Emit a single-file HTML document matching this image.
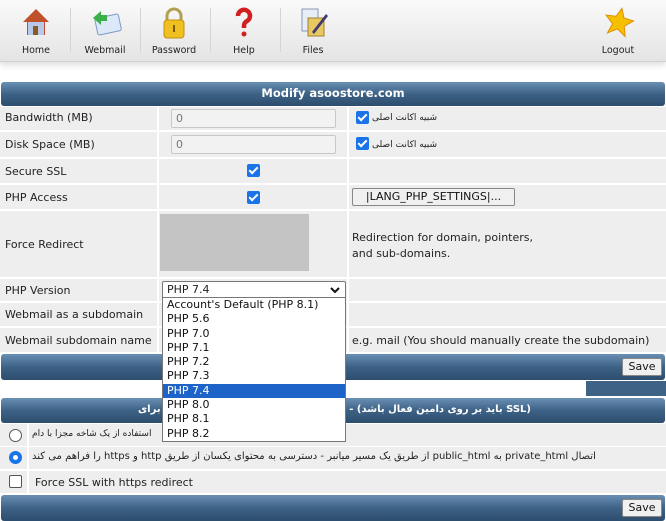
<!DOCTYPE html>
<html><head><meta charset="utf-8"><style>
*{box-sizing:border-box;margin:0;padding:0}
body{width:666px;height:519px;overflow:hidden;background:#fff;font-family:"DejaVu Sans","Liberation Sans","Noto Sans CJK SC",sans-serif;font-size:11px;color:#222;position:relative}
.tb{position:absolute;left:0;top:0;width:666px;height:62px;background:linear-gradient(#fafafa,#e4e4e4);border-bottom:1px solid #d0d0d0;box-shadow:0 3px 6px #ddd}
.ti{position:absolute;top:0;width:70px;height:60px;text-align:center;font-size:9.5px;color:#222}
.ti span{position:absolute;left:0;right:0;top:45px}
.ti svg{position:absolute;left:20px;top:6px}
.dv{position:absolute;top:8px;width:1px;height:44px;background:#d4d4d4}
.bar{position:absolute;left:1px;width:664px;background:linear-gradient(#6a8fb4,#3d6286 50%,#2d4d6d);border-radius:3px;color:#fff;font-weight:bold;text-align:center}
.row{position:absolute;left:0;width:666px;background:#eeeeee}
.c{position:absolute;top:0;bottom:0;background:#eeeeee}
.l{position:absolute;left:5px}
.inp{position:absolute;left:171px;width:165px;height:19px;border:1px solid #c8c8c8;border-radius:2px;background:#f2f2f2;color:#777;padding-left:4px;line-height:17px}
.cb{position:absolute;width:13px;height:13px;background:#1a73e8;border-radius:2px}
.cb:after{content:"";position:absolute;left:4px;top:1px;width:3px;height:7px;border:solid #fff;border-width:0 2px 2px 0;transform:rotate(45deg)}
.fa{font-size:9px}
.btn{position:absolute;border:1px solid #888;border-radius:2px;background:#f0f0f0;color:#111;text-align:center}
.dd{position:absolute;left:162px;top:297px;width:184px;height:145px;background:#fff;border:1px solid #777}
.dd div{height:14.3px;line-height:14px;padding-left:4px;font-size:11px;color:#111}
.dd .s{background:#1e64c8;color:#fff}
.rb{position:absolute;width:13px;height:13px;border-radius:50%;border:1px solid #555;background:#fff}
</style></head><body>
<div class="tb">
 <div class="ti" style="left:1px"><svg width="30" height="32" viewBox="0 0 30 32"><polygon points="15,3 2,16 6,16 6,29 24,29 24,16 28,16" fill="#c0502a"/><rect x="7" y="16" width="16" height="13" fill="#b8c8ea"/><rect x="12" y="20" width="5" height="9" fill="#8a5a22"/></svg><span>Home</span></div>
 <div class="dv" style="left:70px"></div>
 <div class="ti" style="left:70px"><svg width="32" height="32" viewBox="0 0 32 32"><rect x="6" y="10" width="24" height="17" rx="2" fill="#dde8f8" stroke="#7a9ac8" transform="rotate(-12 18 18)"/><path d="M3 12 l8-7 v4 h6 v6 h-6 v4z" fill="#3ab04a"/></svg><span>Webmail</span></div>
 <div class="dv" style="left:140px"></div>
 <div class="ti" style="left:139px"><svg width="30" height="34" viewBox="0 0 30 34"><path d="M8 15 v-5 a7 7 0 0 1 14 0 v5" fill="none" stroke="#b0a050" stroke-width="3"/><rect x="5" y="14" width="20" height="18" rx="3" fill="#f0c020" stroke="#c09010"/><rect x="14" y="19" width="2" height="7" fill="#7a5a10"/></svg><span>Password</span></div>
 <div class="dv" style="left:210px"></div>
 <div class="ti" style="left:209px"><svg width="30" height="32" viewBox="0 0 30 32"><path d="M9 10 a6 6 0 1 1 9 5 c-3 2-3 3-3 7" fill="none" stroke="#d02020" stroke-width="4.5"/><circle cx="15" cy="28" r="2.5" fill="#d02020"/></svg><span>Help</span></div>
 <div class="dv" style="left:280px"></div>
 <div class="ti" style="left:278px"><svg width="32" height="32" viewBox="0 0 32 32"><rect x="4" y="3" width="16" height="22" fill="#e8eef8" stroke="#8898b8"/><rect x="10" y="12" width="16" height="18" fill="#e8c860" stroke="#a08030"/><path d="M14 26 l14-18 2 2 -14 18z" fill="#403a70"/></svg><span>Files</span></div>
 <div class="ti" style="left:583px"><svg width="32" height="32" viewBox="0 0 32 32"><polygon points="16,2 20,11 30,12 22,19 25,29 16,23 7,29 10,19 2,12 12,11" fill="#f5c000" stroke="#e09000" transform="rotate(12 16 16)"/></svg><span>Logout</span></div>
</div>

<div class="bar" style="top:82px;height:24px;line-height:23px;font-size:11.5px">Modify asoostore.com</div>

<div class="row" style="top:107px;height:23px"><span class="l" style="top:4px">Bandwidth (MB)</span><div class="c" style="left:157px;width:2px;background:#fff"></div><div class="c" style="left:347px;width:2px;background:#fff"></div><div class="inp" style="top:2px">0</div><div class="cb" style="left:356px;top:4px"></div><span class="fa" style="position:absolute;left:372px;top:6px">شبیه اکانت اصلی</span></div>
<div class="row" style="top:132px;height:25px"><span class="l" style="top:6px">Disk Space (MB)</span><div class="c" style="left:157px;width:2px;background:#fff"></div><div class="c" style="left:347px;width:2px;background:#fff"></div><div class="inp" style="top:3px">0</div><div class="cb" style="left:356px;top:5px"></div><span class="fa" style="position:absolute;left:372px;top:8px">شبیه اکانت اصلی</span></div>
<div class="row" style="top:159px;height:24px"><span class="l" style="top:6px">Secure SSL</span><div class="c" style="left:157px;width:2px;background:#fff"></div><div class="c" style="left:347px;width:2px;background:#fff"></div><div class="cb" style="left:247px;top:5px"></div></div>
<div class="row" style="top:185px;height:24px"><span class="l" style="top:6px">PHP Access</span><div class="c" style="left:157px;width:2px;background:#fff"></div><div class="c" style="left:347px;width:2px;background:#fff"></div><div class="cb" style="left:247px;top:6px"></div><div class="btn" style="left:352px;top:3px;width:163px;height:18px;line-height:16px">|LANG_PHP_SETTINGS|...</div></div>
<div class="row" style="top:211px;height:66px"><span class="l" style="top:27px">Force Redirect</span><div class="c" style="left:157px;width:2px;background:#fff"></div><div class="c" style="left:347px;width:2px;background:#fff"></div><div style="position:absolute;left:160px;top:3px;width:149px;height:57px;background:#c4c4c4"></div><div style="position:absolute;left:352px;top:19px;line-height:16px">Redirection for domain, pointers,<br>and sub-domains.</div></div>
<div class="row" style="top:279px;height:22px"><span class="l" style="top:5px">PHP Version</span><div class="c" style="left:157px;width:2px;background:#fff"></div><div class="c" style="left:347px;width:2px;background:#fff"></div><div style="position:absolute;left:162px;top:2px;width:184px;height:18px;background:#fff;border:1px solid #777;border-radius:2px;padding-left:4px;line-height:16px">PHP 7.4<svg style="position:absolute;right:5px;top:5px" width="10" height="7" viewBox="0 0 10 7"><path d="M1 1 L5 5 L9 1" fill="none" stroke="#111" stroke-width="2"/></svg></div></div>
<div class="row" style="top:303px;height:23px"><span class="l" style="top:5px">Webmail as a subdomain</span><div class="c" style="left:157px;width:2px;background:#fff"></div><div class="c" style="left:347px;width:2px;background:#fff"></div></div>
<div class="row" style="top:328px;height:24px"><span class="l" style="top:6px">Webmail subdomain name</span><div class="c" style="left:157px;width:2px;background:#fff"></div><div class="c" style="left:347px;width:2px;background:#fff"></div><span style="position:absolute;left:352px;top:6px">e.g. mail (You should manually create the subdomain)</span></div>
<div class="bar" style="top:354px;height:26px"><div class="btn" style="right:3px;top:4px;width:40px;height:18px;line-height:16px;font-weight:normal">Save</div></div>
<div style="position:absolute;left:586px;top:381px;width:80px;height:15px;background:#3d6286"></div>

<div class="bar" style="top:398px;height:25px;line-height:24px;font-size:10px"><span style="position:absolute;left:137px;top:0">برای</span><span style="position:absolute;left:262px;top:0;direction:ltr;unicode-bidi:isolate;white-space:nowrap">asoostore.com - (<span dir="rtl" style="unicode-bidi:isolate">باید بر روی دامین فعال باشد</span> SSL)</span></div>
<div class="row" style="top:424px;height:22px"><div class="rb" style="left:9px;top:5px"></div><div class="c" style="left:27px;width:2px;background:#fff"></div><span class="fa" dir="rtl" style="position:absolute;left:32px;top:5px">استفاده از یک شاخه مجزا با دام</span></div>
<div class="row" style="top:447px;height:22px"><div class="rb" style="left:9px;top:4px;border:4px solid #1a73e8"></div><div class="c" style="left:27px;width:2px;background:#fff"></div><span dir="rtl" style="position:absolute;left:32px;top:4px;font-size:10px;unicode-bidi:isolate">اتصال private_html به public_html از طریق یک مسیر میانبر - دسترسی به محتوای یکسان از طریق http و https را فراهم می کند</span></div>
<div class="row" style="top:471px;height:22px"><div class="rb" style="left:9px;top:4px;border-radius:2px"></div><div class="c" style="left:27px;width:2px;background:#fff"></div><span style="position:absolute;left:35px;top:5px">Force SSL with https redirect</span></div>
<div class="bar" style="top:495px;height:26px"><div class="btn" style="right:3px;top:4px;width:40px;height:18px;line-height:16px;font-weight:normal">Save</div></div>

<div class="dd"><div>Account's Default (PHP 8.1)</div><div>PHP 5.6</div><div>PHP 7.0</div><div>PHP 7.1</div><div>PHP 7.2</div><div>PHP 7.3</div><div class="s">PHP 7.4</div><div>PHP 8.0</div><div>PHP 8.1</div><div>PHP 8.2</div></div>
</body></html>
